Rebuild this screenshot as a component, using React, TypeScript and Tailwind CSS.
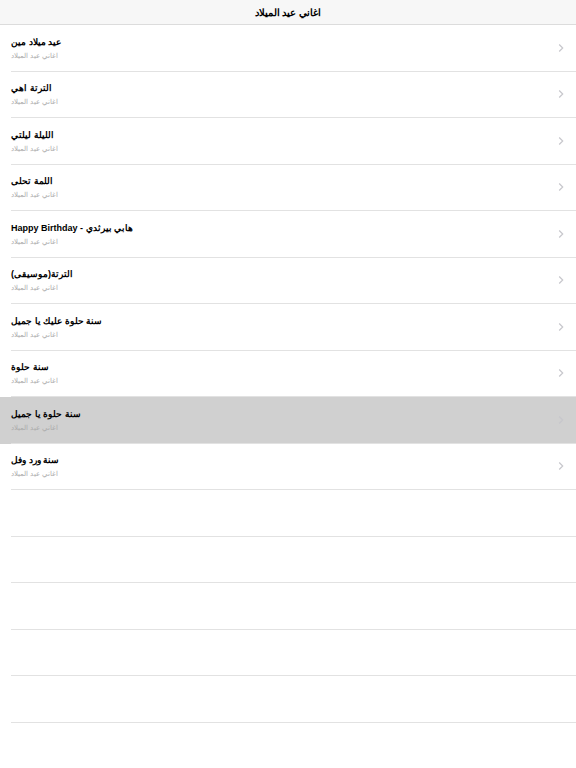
import React from "react";

const songs = [
  "عيد ميلاد مين",
  "الترتة اهي",
  "الليلة ليلتي",
  "اللمة تحلى",
  "Happy Birthday - هابي بيرثدي",
  "الترتة(موسيقى)",
  "سنة حلوة عليك يا جميل",
  "سنة حلوة",
  "سنة حلوة يا جميل",
  "سنة ورد وفل",
];

const Chevron = () => (
  <svg width="6" height="10" viewBox="0 0 6 10" className="shrink-0">
    <path d="M1.2 1.5l3.5 3.5-3.5 3.5" fill="none" stroke="#c7c7cc" strokeWidth="1.2" />
  </svg>
);

export default function App() {
  return (
    <div
      className="flex h-[768px] w-[576px] flex-col overflow-hidden bg-white"
      style={{ fontFamily: '"Liberation Sans", sans-serif' }}
    >
      {/* Nav bar */}
      <div className="flex h-[25px] shrink-0 items-center justify-center border-b border-[#dcdcdc] bg-[#f7f7f7]">
        <span className="text-[10px] font-semibold text-black">اغاني عيد الميلاد</span>
      </div>

      {/* List */}
      <div className="flex flex-col">
        {songs.map((title, i) => (
          <div
            key={i}
            className={`flex h-[46.5px] items-stretch pl-[11px] ${i === 8 ? "bg-[#d0d0d0]" : ""}`}
          >
            <div className="flex flex-1 items-center border-b border-[#e2e2e2] pr-[12px]">
              <div className="flex flex-1 flex-col gap-[3px] pt-[1px]">
                <span className="text-[9px] font-bold leading-[12px] text-black">{title}</span>
                <span className="text-[7px] leading-[10px] text-[#ababab]">اغاني عيد الميلاد</span>
              </div>
              <Chevron />
            </div>
          </div>
        ))}
        {[0, 1, 2, 3, 4].map((i) => (
          <div key={`e${i}`} className="flex h-[46.5px] pl-[11px]">
            <div className="flex-1 border-b border-[#e2e2e2]" />
          </div>
        ))}
      </div>
    </div>
  );
}
